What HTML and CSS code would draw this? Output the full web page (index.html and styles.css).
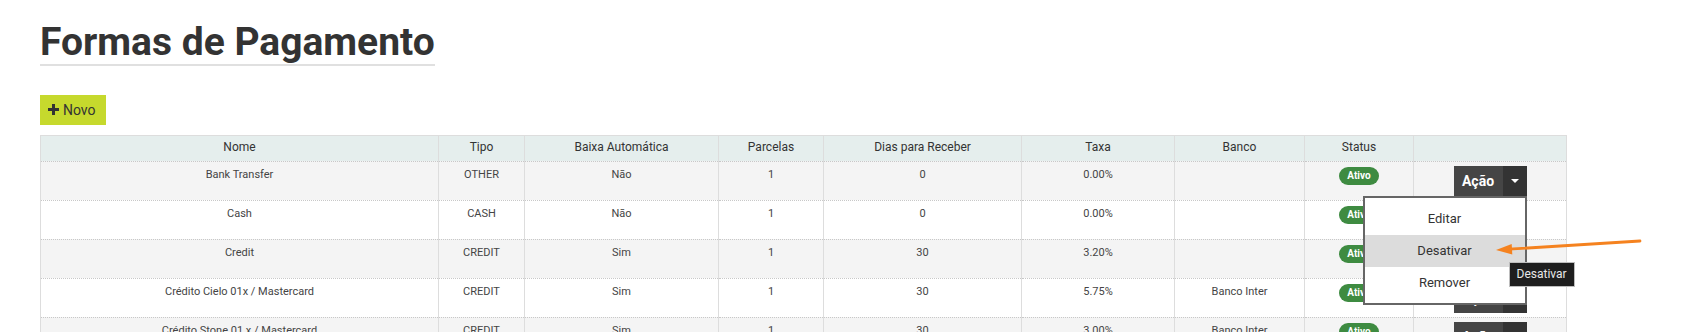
FILE: index.html
```html
<!DOCTYPE html>
<html lang="pt-BR">
<head>
<meta charset="utf-8">
<title>Formas de Pagamento</title>
<link rel="stylesheet" href="styles.css">
</head>
<body>
<div class="page">
  <div class="title-wrap"><h1 class="title">Formas de Pagamento</h1></div>
  <div class="toolbar">
    <button class="btn-new"><svg class="plus" width="11" height="11" viewBox="0 0 11 11"><rect x="0" y="4" width="11" height="3"/><rect x="4" y="0" width="3" height="11"/></svg>Novo</button>
  </div>
  <table class="grid">
    <colgroup>
      <col class="c-nome"><col class="c-tipo"><col class="c-baixa"><col class="c-parc"><col class="c-dias"><col class="c-taxa"><col class="c-banco"><col class="c-status"><col class="c-acao">
    </colgroup>
    <thead>
      <tr><th>Nome</th><th>Tipo</th><th>Baixa Automática</th><th>Parcelas</th><th>Dias para Receber</th><th>Taxa</th><th>Banco</th><th>Status</th><th></th></tr>
    </thead>
    <tbody>
      <tr>
        <td>Bank Transfer</td><td>OTHER</td><td>Não</td><td>1</td><td>0</td><td>0.00%</td><td></td>
        <td><span class="badge">Ativo</span></td>
        <td>
          <div class="btn-group">
            <span class="btn-main">Ação</span><span class="btn-caret"><i class="caret"></i></span>
            <div class="dropdown">
              <div class="dd-item">Editar</div>
              <div class="dd-item active">Desativar</div>
              <div class="dd-item">Remover</div>
              <div class="tip">Desativar</div>
            </div>
          </div>
        </td>
      </tr>
      <tr>
        <td>Cash</td><td>CASH</td><td>Não</td><td>1</td><td>0</td><td>0.00%</td><td></td>
        <td><span class="badge">Ativo</span></td>
        <td><div class="btn-group"><span class="btn-main">Ação</span><span class="btn-caret"><i class="caret"></i></span></div></td>
      </tr>
      <tr>
        <td>Credit</td><td>CREDIT</td><td>Sim</td><td>1</td><td>30</td><td>3.20%</td><td></td>
        <td><span class="badge">Ativo</span></td>
        <td><div class="btn-group"><span class="btn-main">Ação</span><span class="btn-caret"><i class="caret"></i></span></div></td>
      </tr>
      <tr>
        <td>Crédito Cielo 01x / Mastercard</td><td>CREDIT</td><td>Sim</td><td>1</td><td>30</td><td>5.75%</td><td>Banco Inter</td>
        <td><span class="badge">Ativo</span></td>
        <td><div class="btn-group"><span class="btn-main">Ação</span><span class="btn-caret"><i class="caret"></i></span></div></td>
      </tr>
      <tr>
        <td>Crédito Stone 01 x / Mastercard</td><td>CREDIT</td><td>Sim</td><td>1</td><td>30</td><td>3.00%</td><td>Banco Inter</td>
        <td><span class="badge">Ativo</span></td>
        <td><div class="btn-group"><span class="btn-main">Ação</span><span class="btn-caret"><i class="caret"></i></span></div></td>
      </tr>
    </tbody>
  </table>
  <svg class="annot-arrow" width="156" height="24" viewBox="0 0 156 24">
    <line x1="150" y1="7" x2="19" y2="15.2" stroke="#f5821f" stroke-width="2.8" stroke-linecap="round"/>
    <polygon points="6,16 22.3,20.5 21.7,10" fill="#f5821f"/>
  </svg>
</div>
</body>
</html>
```

FILE: styles.css
```css
html, body {
  margin: 0;
  padding: 0;
  overflow: hidden;
  background: #fff;
}
body {
  font-family: Roboto, "Liberation Sans", sans-serif;
  color: #333;
}
.page {
  position: relative;
  padding: 21px 0 0 40px;
}
.title-wrap {
  display: flex;
}
.title {
  margin: 0;
  font-size: 39px;
  line-height: 1.1;
  font-weight: 700;
  color: #333;
  border-bottom: 2px solid #e0e0e0;
}
.toolbar {
  margin-top: 29px;
  display: flex;
}
.btn-new {
  display: inline-flex;
  align-items: center;
  gap: 4px;
  height: 30px;
  padding: 0 10px 0 8px;
  border: none;
  background: #c6d92d;
  color: #333;
  font-family: Roboto, "Liberation Sans", sans-serif;
  font-size: 14px;
}
.plus {
  fill: #333;
}
.grid {
  margin-top: 10px;
  width: 1526px;
  border-collapse: collapse;
  table-layout: fixed;
  border: 1px solid #ddd;
}
.c-nome { width: 398px; }
.c-tipo { width: 86px; }
.c-baixa { width: 194px; }
.c-parc { width: 105px; }
.c-dias { width: 198px; }
.c-taxa { width: 153px; }
.c-banco { width: 130px; }
.c-status { width: 109px; }
.c-acao { width: 153px; }
.grid th {
  background: #e5eeed;
  font-weight: 400;
  font-size: 12px;
  line-height: 17px;
  color: #333;
  padding: 3px 4px 5px;
  border-left: 1px solid #ddd;
  border-right: 1px solid #ddd;
  border-bottom: 1px dotted #c8c8c8;
  text-align: center;
}
.grid td {
  font-size: 11px;
  line-height: 18px;
  color: #444;
  padding: 4px;
  height: 30px;
  vertical-align: top;
  text-align: center;
  border-left: 1px solid #ddd;
  border-right: 1px solid #ddd;
  border-top: 1px dotted #c8c8c8;
}
.grid tbody tr:nth-child(odd) td {
  background: #f4f4f4;
}
.badge {
  display: inline-block;
  margin-top: 1px;
  padding: 2px 8px;
  border-radius: 9px;
  background: #3e8b41;
  color: #fff;
  font-size: 10px;
  line-height: 14px;
  font-weight: 700;
  vertical-align: top;
}
.btn-group {
  position: relative;
  display: inline-flex;
  vertical-align: top;
  height: 30px;
}
.btn-main {
  width: 49px;
  background: #454545;
  color: #fff;
  font-size: 14px;
  font-weight: 700;
  line-height: 30px;
  text-align: center;
}
.btn-caret {
  width: 24px;
  background: #333;
  display: flex;
  align-items: center;
  justify-content: center;
}
.caret {
  width: 0;
  height: 0;
  border-left: 4px solid transparent;
  border-right: 4px solid transparent;
  border-top: 4px solid #fff;
}
.dropdown {
  position: absolute;
  z-index: 10;
  top: 30px;
  right: 0;
  width: 164px;
  box-sizing: border-box;
  border: 2px solid #666;
  background: #fff;
  padding: 5px 0 4px;
}
.dd-item {
  height: 32px;
  line-height: 32px;
  font-size: 13px;
  color: #333;
  text-align: center;
}
.dd-item.active {
  background: #dcdcdc;
}
.tip {
  position: absolute;
  left: 144px;
  top: 64px;
  padding: 0 7px;
  line-height: 23px;
  font-size: 12px;
  color: #e8e8e8;
  background: #1e1e1e;
  border: 1px solid #bdbdbd;
  white-space: nowrap;
}
.annot-arrow {
  position: absolute;
  left: 1490px;
  top: 234px;
  z-index: 20;
}
```
